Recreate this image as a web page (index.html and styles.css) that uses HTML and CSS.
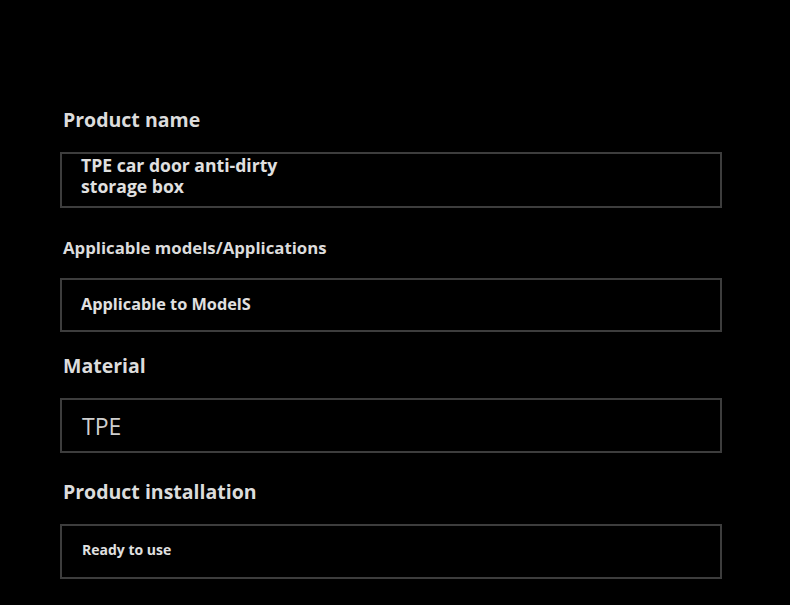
FILE: index.html
```html
<!DOCTYPE html>
<html>
<head>
<meta charset="utf-8">
<link rel="stylesheet" href="styles.css">
</head>
<body>
<main class="sheet">
  <section class="field f1">
    <h2 class="label lg">Product name</h2>
    <div class="box b1"><p class="val v1">TPE car door anti-dirty<br>storage box</p></div>
  </section>
  <section class="field f2">
    <h2 class="label md">Applicable models/Applications</h2>
    <div class="box b2"><p class="val v2">Applicable to ModelS</p></div>
  </section>
  <section class="field f3">
    <h2 class="label lg">Material</h2>
    <div class="box b3"><p class="val v3">TPE</p></div>
  </section>
  <section class="field f4">
    <h2 class="label lg">Product installation</h2>
    <div class="box b4"><p class="val v4">Ready to use</p></div>
  </section>
</main>
</body>
</html>
```

FILE: styles.css
```css
html, body {
  margin: 0;
  padding: 0;
  background: #000;
}
body {
  font-family: "Open Sans", "Noto Sans", sans-serif;
  color: #d9d9d9;
  width: 790px;
  height: 605px;
  overflow: hidden;
}
.sheet {
  display: flex;
  flex-direction: column;
  padding: 108px 68px 0 60px;
}
.field {
  display: flex;
  flex-direction: column;
}
.label {
  margin: 0;
  padding-left: 3px;
  height: 24px;
  line-height: 24px;
  font-weight: 700;
  color: #dcdcdc;
  white-space: nowrap;
}
.label.lg { font-size: 19.5px; }
.label.md { font-size: 16.8px; }
.box {
  border: 2px solid #3d3d3d;
  box-sizing: border-box;
  display: flex;
  align-items: center;
  padding-left: 19px;
}
.val {
  margin: 0;
  font-weight: 700;
  color: #e0e0e0;
  white-space: nowrap;
}
.f1 .label { margin-bottom: 20px; }
.b1 { height: 56px; align-items: flex-start; padding-top: 1px; }
.v1 { font-size: 17.6px; line-height: 21px; }

.f2 { margin-top: 28px; }
.f2 .label { margin-bottom: 18px; }
.b2 { height: 54px; }
.v2 { font-size: 16.3px; line-height: 22px; padding-bottom: 2px; }

.f3 { margin-top: 22px; }
.f3 .label { margin-bottom: 20px; }
.b3 { height: 55px; padding-left: 20px; }
.v3 { font-size: 23px; font-weight: 400; color: #cfcfcf; }

.f4 { margin-top: 27px; }
.f4 .label { margin-bottom: 20px; }
.b4 { height: 55px; padding-left: 20px; }
.v4 { font-size: 14px; line-height: 20px; padding-bottom: 3px; }
```
